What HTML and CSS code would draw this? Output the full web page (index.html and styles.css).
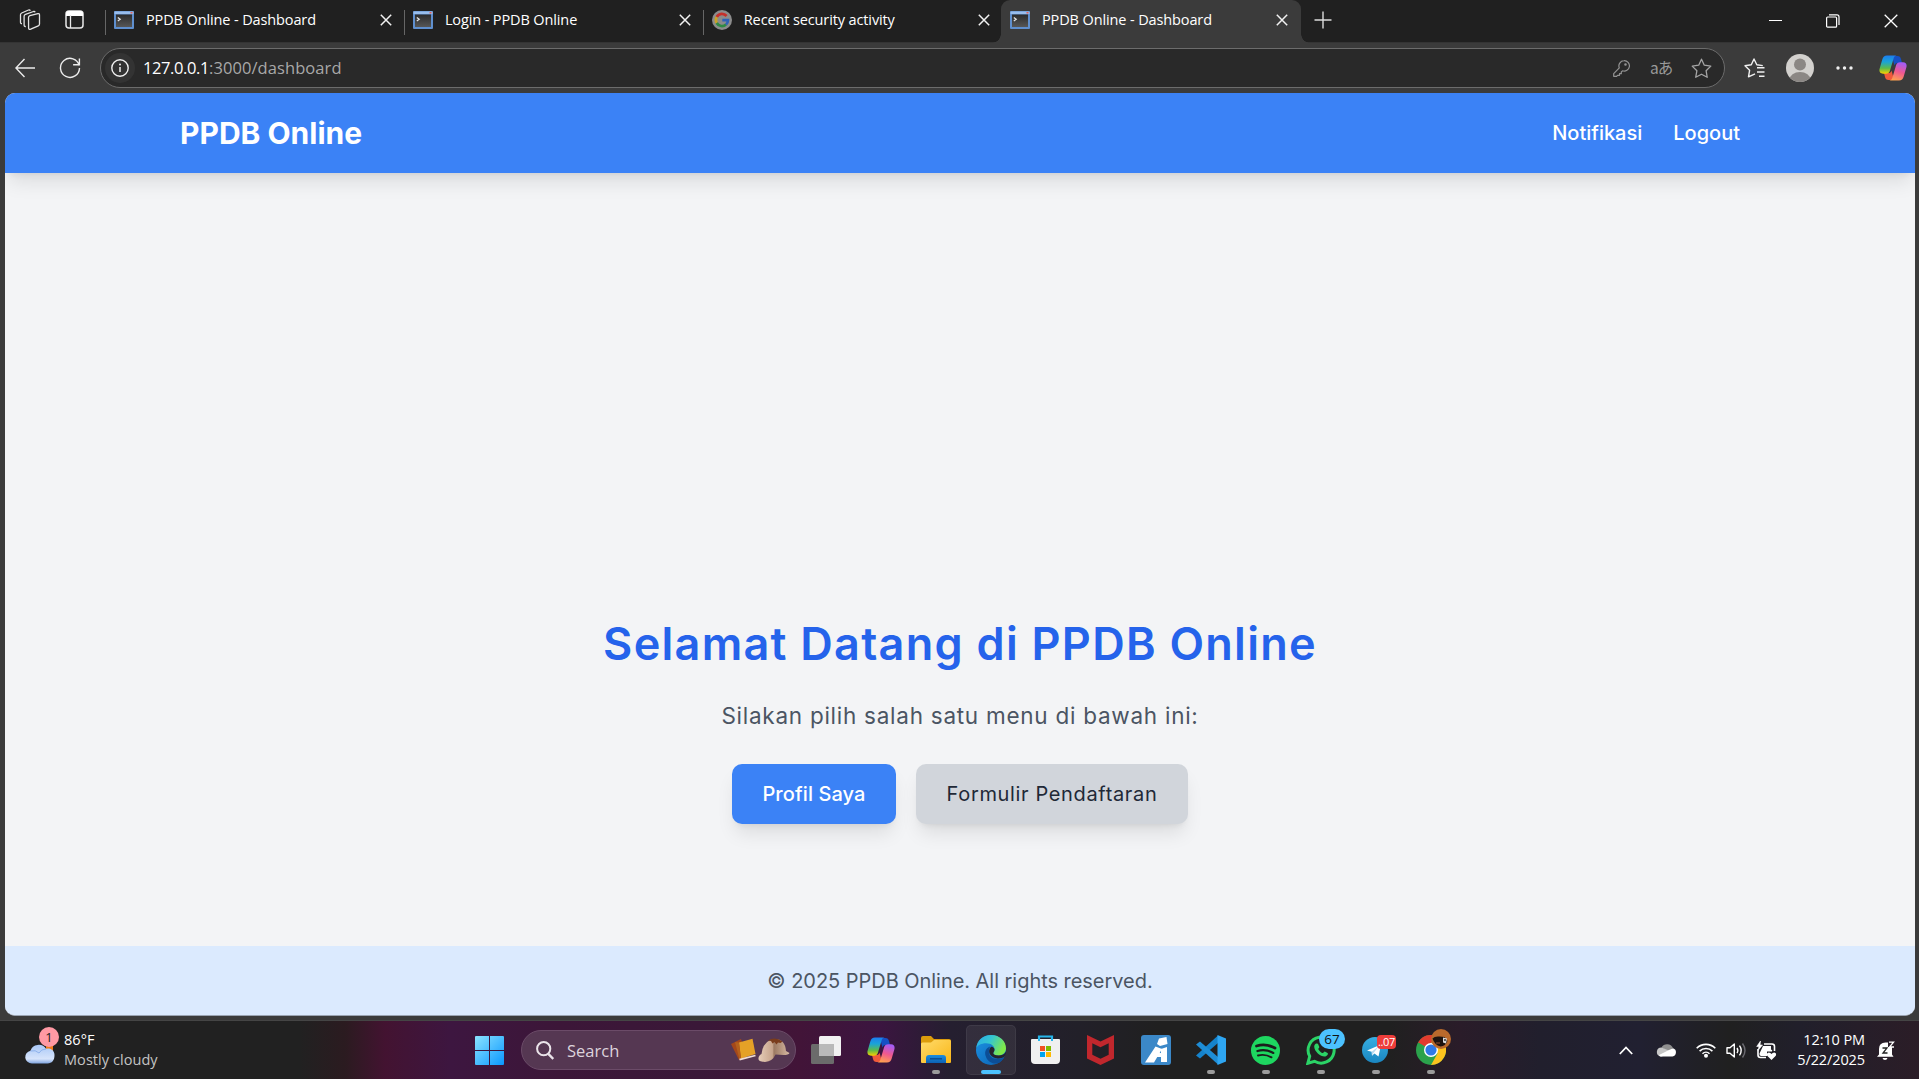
FILE: index.html
```html
<!DOCTYPE html>
<html lang="id">
<head>
<meta charset="utf-8">
<title>PPDB Online - Dashboard</title>
<link rel="stylesheet" href="styles.css">
</head>
<body>
<svg class="defs" width="0" height="0" aria-hidden="true">
  <defs>
    <linearGradient id="gTerm" x1="0" y1="0" x2="0" y2="1"><stop offset="0" stop-color="#2b2b2b"/><stop offset="1" stop-color="#565656"/></linearGradient>
    <linearGradient id="gCpA" x1="0" y1="0" x2="0" y2="1"><stop offset="0" stop-color="#1c7df0"/><stop offset=".35" stop-color="#1aa3d8"/><stop offset=".7" stop-color="#5dbb4a"/><stop offset="1" stop-color="#f6d000"/></linearGradient>
    <linearGradient id="gCpB" x1=".6" y1="0" x2=".3" y2="1"><stop offset="0" stop-color="#a45cf5"/><stop offset=".5" stop-color="#f0588f"/><stop offset="1" stop-color="#ffa34e"/></linearGradient>
    <linearGradient id="gWin" gradientUnits="userSpaceOnUse" x1="0" y1="0" x2="29" y2="29"><stop offset="0" stop-color="#8be3ff"/><stop offset="1" stop-color="#0a97ff"/></linearGradient>
    <linearGradient id="gFold" x1="0" y1="0" x2="1" y2="1"><stop offset="0" stop-color="#ffdb6b"/><stop offset="1" stop-color="#f9b617"/></linearGradient>
    <linearGradient id="gBlue" x1="0" y1="0" x2="0" y2="1"><stop offset="0" stop-color="#1b8ee0"/><stop offset="1" stop-color="#0c62b5"/></linearGradient>
    <linearGradient id="gEdge" x1="0" y1="0" x2="1" y2=".4"><stop offset="0" stop-color="#2aa9e8"/><stop offset=".5" stop-color="#35c6d0"/><stop offset="1" stop-color="#7fe84a"/></linearGradient>
    <linearGradient id="gEdge2" x1="0" y1="0" x2="1" y2="1"><stop offset="0" stop-color="#1c94e6"/><stop offset="1" stop-color="#0b5fae"/></linearGradient>
    <linearGradient id="gTg" x1="0" y1="0" x2="0" y2="1"><stop offset="0" stop-color="#37aee2"/><stop offset="1" stop-color="#1a86c0"/></linearGradient>
    <linearGradient id="gCloud" x1="0" y1="0" x2="0" y2="1"><stop offset="0" stop-color="#a9c8f7"/><stop offset=".75" stop-color="#d7e4fb"/><stop offset="1" stop-color="#7fa5e0"/></linearGradient>
    <linearGradient id="gCap" x1="0" y1="0" x2="1" y2="0"><stop offset="0" stop-color="#e6cdb8"/><stop offset=".45" stop-color="#c7a48c"/><stop offset=".5" stop-color="#9c7962"/><stop offset="1" stop-color="#d6b9a2"/></linearGradient>
  </defs>
  <symbol id="term" viewBox="0 0 20 18">
    <rect width="20" height="18" rx="1" fill="#5f8fce"/><rect x=".5" y=".5" width="19" height="2.6" fill="#98bdec"/><rect x="16.5" y="1" width="2" height="1.5" fill="#e0605a"/>
    <rect x="2" y="3.5" width="16" height="12.5" fill="url(#gTerm)"/><path d="M3.8 6.5l2.400 1.700-2.400 1.700" fill="none" stroke="#e8e8e8" stroke-width="1.200"/>
  </symbol>
  <symbol id="x" viewBox="0 0 12 12"><path d="M.8.8l10.4 10.4M11.2.8L.8 11.2" fill="none" stroke="#f2f2f2" stroke-width="1.5"/></symbol>
  <symbol id="copilot" viewBox="0 0 28 26">
    <path d="M13 1h5.500c2 0 3 1.200 3.500 3l1 4h-4c-2 0-3 .7-3.600 2.600z" fill="#1650c4"/>
    <path d="M15 25H9.500c-2 0-3-1.200-3.500-3l-1-4h4c2 0 3-.7 3.600-2.600z" fill="#f05a3c"/>
    <path d="M8 .5h9.500c-1.800.3-2.500 1.500-3 3.200L11 15.500c-.7 2.300-2 3.200-4.200 3.200H4C1 18.700-.1 16.600.6 13.800L3.300 4.500C4 1.900 5.500.5 8 .5z" fill="url(#gCpA)"/>
    <path d="M20 25.500h-9.500c1.800-.3 2.500-1.500 3-3.200L17 10.500c.7-2.300 2-3.200 4.200-3.200H24c3 0 4.100 2.100 3.400 4.900l-2.700 9.300c-.7 2.600-2.200 4-4.700 4z" fill="url(#gCpB)"/>
  </symbol>
</svg>

<header class="tabbar">
  <div class="tabtools">
    <svg class="workspaces" width="22" height="22" viewBox="0 0 22 22" fill="none" stroke="#e4e4e4" stroke-width="1.300" stroke-linejoin="round"><path d="M9.500 8.500q0-1.500 1.400-1.900l8-2q1.600-.3 1.600 1.300v9.200q0 1.300-1.200 1.700l-7.600 3.400q-2 .8-2.100-1.200z"/><path d="M6.800 17.500q-1.700.2-1.700-1.600V7.300q0-1.500 1.400-2l8-2.800q1.200-.3 1.600.8"/><path d="M3 14.700q-1.500 0-1.500-1.500V5.800q0-1.300 1.200-1.800L9.500 1q1.300-.5 1.800.7"/></svg>
    <svg width="19" height="19" viewBox="0 0 19 19"><rect x="1" y="1" width="17" height="17" rx="3" fill="none" stroke="#e8e8e8" stroke-width="1.500"/><path d="M1 6V4a3 3 0 0 1 3-3h11a3 3 0 0 1 3 3v2z" fill="#fff"/><path d="M5.500 5v13" stroke="#e8e8e8" stroke-width="1.300"/></svg>
  </div>
  <div class="tab"><svg class="fav" width="20" height="18"><use href="#term"/></svg><span>PPDB Online - Dashboard</span><svg class="close" width="12" height="12"><use href="#x"/></svg></div>
  <div class="tab"><svg class="fav" width="20" height="18"><use href="#term"/></svg><span>Login - PPDB Online</span><svg class="close" width="12" height="12"><use href="#x"/></svg></div>
  <div class="tab"><svg class="fav" width="20" height="20" viewBox="0 0 20 20"><circle cx="10" cy="10" r="10" fill="#8c8c8c"/><g fill="none" stroke-width="2.700"><path d="M4.700 7A6.100 6.100 0 0 1 14.600 6" stroke="#c5302b"/><path d="M4.700 13A6.100 6.100 0 0 1 4.700 7" stroke="#c9a227"/><path d="M4.700 13A6.100 6.100 0 0 0 14 14.600" stroke="#2f8a44"/><path d="M14 14.600A6.100 6.100 0 0 0 16 10.200H10.300" stroke="#2f62b8"/></g></svg><span>Recent security activity</span><svg class="close" width="12" height="12"><use href="#x"/></svg></div>
  <div class="tab active"><svg class="fav" width="20" height="18"><use href="#term"/></svg><span>PPDB Online - Dashboard</span><svg class="close" width="12" height="12"><use href="#x"/></svg></div>
  <svg class="newtab" width="18" height="18" viewBox="0 0 18 18"><path d="M9 .5v17M.5 9h17" stroke="#dcdcdc" stroke-width="1.400"/></svg>
  <div class="winctl">
    <svg width="13" height="13" viewBox="0 0 13 13"><path d="M0 5.500h13" stroke="#fff"/></svg>
    <svg width="14" height="14" viewBox="0 0 14 14" fill="none" stroke="#fff" stroke-width="1.200"><rect x=".6" y="3" width="10" height="10.200" rx="1"/><path d="M3 .9h8q2 0 2 2v8.100"/></svg>
    <svg width="14" height="14" viewBox="0 0 14 14"><path d="M.7.7l12.600 12.600M13.300.7L.7 13.300" stroke="#fff" stroke-width="1.300"/></svg>
  </div>
</header>

<div class="toolbar">
  <svg class="back" width="20" height="20" viewBox="0 0 20 20" fill="none" stroke="#ececec" stroke-width="1.400"><path d="M20 10H1M9.500 1L.9 10l8.600 9"/></svg>
  <svg class="reload" width="22" height="22" viewBox="0 0 22 22" fill="none" stroke="#ececec" stroke-width="1.400"><path d="M20.200 8.500A9.500 9.500 0 1 0 20.500 11M20.400 1.500v6.300h-6.300"/></svg>
  <div class="omnibox">
    <span class="siteinfo"><svg width="18" height="18" viewBox="0 0 18 18"><circle cx="9" cy="9" r="8.200" fill="none" stroke="#f0f0f0" stroke-width="1.400"/><path d="M9 8v5" stroke="#f0f0f0" stroke-width="1.500"/><circle cx="9" cy="5.500" r="1" fill="#f0f0f0"/></svg></span>
    <span class="url"><b>127.0.0.1</b>:3000/dashboard</span>
    <svg class="key" width="17" height="17" viewBox="0 0 17 17" fill="none" stroke="#939393" stroke-width="1.200" stroke-linejoin="round"><path d="M11 .7a5.200 5.200 0 1 1-1.500 10.100L8.300 12v1.700H6.500v1.600H4.500l-.9 1H.7v-2.600l5.600-5.800A5.200 5.200 0 0 1 11 .7z"/><circle cx="12.500" cy="4.500" r=".7"/></svg>
    <span class="translate">aあ</span>
    <svg class="star" width="21" height="21" viewBox="0 0 21 21" fill="none" stroke="#a5a5a5" stroke-width="1.300" stroke-linejoin="round"><path d="M10.500 1.200l2.800 6 6.500.9-4.700 4.600 1.100 6.600-5.700-3.100-5.800 3.100 1.200-6.600L1.200 8.100l6.500-.9z"/></svg>
  </div>
  <svg class="favs" width="21" height="20" viewBox="0 0 21 20" fill="none" stroke="#f0f0f0" stroke-width="1.400" stroke-linejoin="round"><path d="M20.500 9.800H13M20.500 14H13M20.500 18.200H15M11 15.800l-6.500 3 1.100-6.500L1 7.700l6.300-.9L10 1l2.800 5.800 6 .8"/></svg>
  <svg class="avatar" width="28" height="28" viewBox="0 0 28 28"><clipPath id="av"><circle cx="14" cy="14" r="14"/></clipPath><g clip-path="url(#av)"><rect width="28" height="28" fill="#d3d1ce"/><circle cx="14" cy="10.500" r="6" fill="#8b8784"/><ellipse cx="14" cy="26" rx="10.500" ry="8" fill="#8b8784"/></g></svg>
  <svg class="dots" width="17" height="4" viewBox="0 0 17 4" fill="#f0f0f0"><circle cx="2" cy="2" r="1.700"/><circle cx="8.500" cy="2" r="1.700"/><circle cx="15" cy="2" r="1.700"/></svg>
  <svg width="28" height="26"><use href="#copilot"/></svg>
</div>

<div class="viewport">
  <nav class="navbar">
    <div class="brand">PPDB Online</div>
    <div class="links"><a>Notifikasi</a><a>Logout</a></div>
  </nav>
  <main class="main">
    <h1>Selamat Datang di PPDB Online</h1>
    <p>Silakan pilih salah satu menu di bawah ini:</p>
    <div class="actions">
      <a class="btn primary">Profil Saya</a>
      <a class="btn secondary">Formulir Pendaftaran</a>
    </div>
  </main>
  <footer class="footer">© 2025 PPDB Online. All rights reserved.</footer>
</div>

<div class="taskbar">
  <div class="weather">
    <div class="weathericon">
      <svg width="32" height="22" viewBox="0 0 32 22"><path d="M22 2h7v6h-7z" fill="#f07a1c"/><path d="M8 20.500a7 6.500 0 0 1-1.500-12.800A8.500 8 0 0 1 22 5.800a6.500 6.500 0 0 1 8.500 6.500c0 5-2.500 8.200-7 8.200z" fill="url(#gCloud)"/><path d="M6.500 8q5-1.500 8.500 2 2-4 7-4" fill="none" stroke="#8fb2ec" stroke-width="1"/></svg>
      <span class="alert">1</span>
    </div>
    <div class="weathertext"><div>86°F</div><div class="dim">Mostly cloudy</div></div>
  </div>
  <svg class="start" width="29" height="29" viewBox="0 0 29 29" fill="url(#gWin)"><path d="M1 0h13v14H0V1q0-1 1-1zM15 0h13q1 0 1 1v13H15zM0 15h14v14H1q-1 0-1-1zM15 15h14v13q0 1-1 1H15z"/></svg>
  <div class="search">
    <svg width="18" height="19" viewBox="0 0 18 19" fill="none" stroke="#ebe4ea"><circle cx="7.700" cy="7.700" r="6.600" stroke-width="2"/><path d="M12.300 12.800l5 5.200" stroke-width="2.400"/></svg>
    <span>Search</span>
    <svg width="60" height="27" viewBox="0 0 60 27"><path d="M1 7l10-5 6 18-8 3z" fill="#a5481a"/><path d="M9 5.500l13.500-3.800L25.500 17 11 21.500z" fill="#e5a127"/><path d="M9 5.500L11 21.500l-1.500 1L5 5z" fill="#b4601c"/><path d="M9.500 22.700l16-4.200" stroke="#f1dfd6" stroke-width="1.800"/><path d="M31.500 17Q33 3 45 2q10 0 11 12l3.500 2q-1 2-6 2l-8-.5q-3 7-10.500 7.500-7-.5-6.500-3.500 0-3 3-4.500z" fill="url(#gCap)"/><path d="M38 3.500q7-4.500 14.500 1l-2 1.500-2.500-.5-1.500 2-2-2.500-2 1.500-1.500-2.500z" fill="#7a3c1c"/></svg>
  </div>
  <div class="apps">
    <div class="app"><svg width="30" height="29" viewBox="0 0 30 29"><rect x="0" y="8" width="23" height="20" rx="1.500" fill="#6b6b6b"/><rect x="8" y="0" width="22" height="20" rx="1.500" fill="#f1f1f1"/><path d="M8 8h15v12H9.500Q8 20 8 18.500z" fill="#b9b9b9"/></svg></div>
    <div class="app"><svg width="28" height="26"><use href="#copilot"/></svg></div>
    <div class="app run"><svg width="30" height="28" viewBox="0 0 30 28"><path d="M0 2q0-2 2-2h8l3 3h15q2 0 2 2v5H0z" fill="#dc9c0c"/><path d="M0 8q0-1.500 1.500-1.500H10L13 4h16q1 0 1 1.500V26q0 1-1 1H1q-1 0-1-1z" fill="url(#gFold)"/><path d="M5 27v-5q0-3 3-3h14q3 0 3 3v5z" fill="url(#gBlue)"/><path d="M9 22.800h12" stroke="#0a4f94" stroke-width="1.500"/></svg></div>
    <div class="app current"><svg width="30" height="30" viewBox="0 0 30 30"><circle cx="15" cy="15" r="15" fill="url(#gEdge2)"/><path d="M.3 13C1 5 7.500 0 15 0c9 0 15 6.500 15 13.200 0 5-4 7.300-7.500 7.300-3.700 0-5.200-1.300-5.200-2.300 0-.8 1.200-1.300 1.200-3.600 0-3.300-3-6.300-8.500-6.300C5 8.300 1.500 10.500.3 13z" fill="url(#gEdge)"/><path d="M14 11.500c-4 1.500-5.500 5-4.500 9 1.500 5.500 6 8.500 11.500 8 3.500-1.200 6-3.700 7-6-8 3.500-15 .5-15-5.500 0-2 .6-4 1-5.500z" fill="#0c4e97"/><path d="M30 19l-1.800 3c-2 1.200-5 1.800-7.500 1.300C16.500 22.500 13.500 20 13.200 17c-.2-2 .6-4.200 2-5.300 2 .2 3.300 1.300 3.300 2.900 0 2.300-1.200 2.800-1.200 3.600 0 1 1.500 2.300 5.200 2.300 3 0 6-1 7.500-4z" fill="#26222e"/></svg></div>
    <div class="app"><svg width="29" height="30" viewBox="0 0 29 30"><path d="M8 6V1.500h13V6" fill="none" stroke="#27b5ea" stroke-width="2.200"/><path d="M0 5q0-1 1-1h27q1 0 1 1v20q0 4-4 4H4q-4 0-4-4z" fill="#f0f0f0"/><path d="M8 3v3M21 3v3" stroke="#27b5ea" stroke-width="2"/><path d="M9 11h5v5H9z" fill="#f25022"/><path d="M15 11h5v5h-5z" fill="#7fba00"/><path d="M9 17h5v5H9z" fill="#00a4ef"/><path d="M15 17h5v5h-5z" fill="#ffb900"/></svg></div>
    <div class="app"><svg width="27" height="30" viewBox="0 0 27 30"><path d="M0 0l13.500 6.500L27 0v23.500L13.500 30 0 23.500zM5.300 8.300v11.500l8.200 4 8.200-4V8.300l-8.200 4z" fill="#c1272d" fill-rule="evenodd"/></svg></div>
    <div class="app"><svg width="30" height="30" viewBox="0 0 30 30"><rect width="30" height="30" rx="3" fill="#3b88c8"/><path d="M18 3.500L25.500 2l1 7-7.500 2-3-2zM14.500 11.500l6.500 2.500-8 13.500H4zM20 14l6-2v15h-6v-5h-7l2-3.500 5-.5z" fill="#fff"/></svg></div>
    <div class="app run"><svg width="30" height="30" viewBox="0 0 30 30"><path d="M22 8L4 23.500 0 20.500 22 .5z" fill="#1583cc"/><path d="M22 22L4 6.500 0 9.500l22 20z" fill="#1e8dd6"/><path d="M21.500 0L30 3.500v23L21.500 30z" fill="#2ea6f2"/></svg></div>
    <div class="app run"><svg width="29" height="29" viewBox="0 0 29 29"><circle cx="14.500" cy="14.500" r="14.500" fill="#1ed760"/><g fill="none" stroke="#1c1c1c" stroke-linecap="round"><path d="M5.500 10q9.500-2.800 18.500 2" stroke-width="2.800"/><path d="M6.500 15q8-2.300 15.800 1.900" stroke-width="2.300"/><path d="M7 19.500q7-1.800 13.500 1.800" stroke-width="1.900"/></g></svg></div>
    <div class="app run"><svg width="30" height="30" viewBox="0 0 30 30"><path d="M1.800 28.300l1.900-7A13 13 0 1 1 8.500 26.300z" fill="none" stroke="#2bd366" stroke-width="3"/><path d="M10.500 8.500c1 0 1.500.2 1.800 1l1 2.400c.2.700-1 1.500-1 2 0 1 3.500 4.200 4.500 4.200.7 0 1.300-1.500 2-1.500l2.700 1.300c1.200.6-.3 3.600-3 3.600-4 0-10.300-5-10.300-10 0-1.500 1.200-3 2.300-3z" fill="#2bd366"/></svg><span class="badge wa">67</span></div>
    <div class="app run"><svg width="26" height="26" viewBox="0 0 26 26" class="tg"><circle cx="13" cy="13" r="13" fill="url(#gTg)"/><path d="M5 13.500L19 7.500l-2.500 12-4-3-2.500 2.200-.3-4z" fill="#fff"/><path d="M9.700 14.700L17 9l-5.500 7-1.500 2.700z" fill="#b9d9ee"/></svg><span class="badge tgb">..07</span></div>
    <div class="app run"><svg width="30" height="30" viewBox="0 0 30 30"><circle cx="15" cy="15" r="15" fill="#2ba24c"/><path d="M15 15L2 7.500A15 15 0 0 1 28 7.500H15z" fill="#e33b2e"/><path d="M15 7.500h13A15 15 0 0 1 15 30l6.500-11.500z" fill="#fcc31e"/><path d="M2 7.500L8.500 18.700 15 15z" fill="#2ba24c"/><circle cx="15" cy="15" r="7" fill="#fff"/><circle cx="15" cy="15" r="5.600" fill="#2f7ae8"/></svg>
      <svg class="profile" width="20" height="20" viewBox="0 0 20 20"><circle cx="10" cy="10" r="10" fill="#b9692c"/><path d="M1.500 9.500q2-2.500 7-2l5 .5 3 4q-2 5-7 5.500-6-1.500-8-8z" fill="#1d1310"/><path d="M12 8.500l4 1-1 5-3-1z" fill="#dcdcdc"/><circle cx="14" cy="11" r="1" fill="#333"/><path d="M5 13h4v2H5z" fill="#5c3320"/></svg></div>
  </div>
  <div class="tray">
    <svg width="14" height="9" viewBox="0 0 14 9"><path d="M.8 8L7 1.500 13.200 8" fill="none" stroke="#fff" stroke-width="1.800"/></svg>
    <svg class="cloud" width="21" height="14" viewBox="0 0 21 14"><path d="M5.500 4.500A6.500 6.500 0 0 1 17 5l-5 4z" fill="#8f8f8f"/><path d="M4.500 13.500A4.600 4.600 0 0 1 5.500 4.400L14 8l-8 5.500z" fill="#c6c6c6"/><path d="M3 12l10-5 4-1.800a4.300 4.300 0 0 1-.5 8.300H5q-1.500 0-2-1.500z" fill="#fff"/></svg>
    <svg class="wifi" width="20" height="16" viewBox="0 0 20 16" fill="none" stroke="#fff" stroke-width="1.600"><path d="M.7 6.300a13 13 0 0 1 18.600 0M3.600 9.100a9 9 0 0 1 12.800 0M6.500 11.700a5 5 0 0 1 7 0"/><circle cx="10" cy="13.800" r="1.200" fill="#fff"/></svg>
    <svg class="vol" width="21" height="17" viewBox="0 0 21 17" fill="none" stroke="#fff" stroke-width="1.400"><path d="M1 5.700h3L8.300 2v13L4 11.300H1z" stroke-linejoin="round"/><path d="M11 6q1.700 2.500 0 5M13.500 3.700q3.500 4.800 0 9.600"/><path d="M16.500 1.500q5 7 0 14" stroke="#6b6a70"/></svg>
    <svg class="bat" width="21" height="19" viewBox="0 0 21 19"><path d="M8 3h8q2.500 0 2.500 2.500V10M2 8v6q0 2.500 2.500 2.500H10" fill="none" stroke="#fff" stroke-width="1.600"/><path d="M7 5h8v3.500q2 .5 1 2L11 10.500V15H5q-2-.5-1.500-2.500z" fill="#fff"/><path d="M4.500 0L.7 5.500H3L2 9.500 6.500 4H4z" fill="#fff" stroke="#fff" stroke-width=".6"/><path d="M15.500 19l-4.300-4.200q-1-2.800 1.600-3.300 1.800 0 2.700 1.500 1-1.500 2.800-1.500 2.500.5 1.500 3.300z" fill="#fff"/></svg>
    <div class="clock"><div>12:10 PM</div><div>5/22/2025</div></div>
    <svg class="bell" width="18" height="19" viewBox="0 0 18 19"><path d="M2 13.500V8Q2 1.500 8.500 1.500H11V6h4v7.500l1.500 2.200H0z" fill="#fff"/><path d="M5.500 17h5q-.5 2-2.500 2t-2.500-2z" fill="#fff"/><path d="M5.500 7H10L6 12h4.500" fill="none" stroke="#222" stroke-width="1.300"/><path d="M12 1.200h4.500L12.500 6H17" fill="none" stroke="#fff" stroke-width="1.300"/></svg>
  </div>
</div>
</body>
</html>
```

FILE: styles.css
```css
* { box-sizing: border-box; }
html, body { height: 100%; }
body {
  margin: 0;
  display: flex;
  flex-direction: column;
  overflow: hidden;
  background: #3b3b3b;
  color: #fff;
  font-family: "Open Sans", "Noto Sans", sans-serif;
  font-size: 14.5px;
}
svg { display: block; flex: none; }
.defs { position: absolute; }

/* Tab strip */
.tabbar {
  display: flex;
  align-items: center;
  height: 43px;
  padding-bottom: 3px;
  background: #202020;
  border-bottom: 1px solid #343434;
}
.tabtools { display: flex; align-items: center; gap: 24px; width: 105px; padding-left: 19px; }
.tab {
  position: relative;
  display: flex;
  align-items: center;
  width: 298.9px;
  height: 40px;
  padding-left: 9px;
  letter-spacing: -0.12px;
  white-space: nowrap;
}
.tab::before { content: ""; position: absolute; left: 0; top: 10px; width: 1px; height: 25px; background: #666; }
.tab span { margin-left: 12px; line-height: 20px; padding-top: 1px; }
.tab .close { margin-left: auto; margin-right: 12px; }
.tab.active {
  width: 300px;
  height: 43px;
  padding-bottom: 3px;
  margin: 0 0 -3px -0.7px;
  background: #3b3b3b;
  border-radius: 9px 9px 0 0;
}
.tab.active .close { margin-right: 13px; }
.tab.active::before, .tab.active::after {
  content: "";
  position: absolute;
  top: auto;
  bottom: 0;
  width: 9px;
  height: 9px;
}
.tab.active::before { left: -9px; background: radial-gradient(circle at 0 0, transparent 8.5px, #3b3b3b 9px); }
.tab.active::after { right: -9px; background: radial-gradient(circle at 100% 0, transparent 8.5px, #3b3b3b 9px); }
.newtab { margin-left: 13px; }
.winctl { display: flex; align-items: center; gap: 44px; margin: 3px 21px 0 auto; }

/* Address row */
.toolbar { display: flex; align-items: center; height: 50px; padding-left: 15px; }
.reload { margin-left: 24px; }
.omnibox {
  display: flex;
  align-items: center;
  width: 1625px;
  height: 40px;
  margin-left: 19px;
  padding-left: 4px;
  background: #292929;
  border: 1px solid #6c6c6c;
  border-radius: 20px;
}
.siteinfo { display: flex; align-items: center; justify-content: center; width: 30px; height: 30px; border-radius: 50%; background: #333; }
.url { margin-left: 8px; padding-bottom: 2px; font-size: 16.5px; letter-spacing: 0.08px; color: #a8a8a8; }
.url b { font-weight: 400; color: #fff; letter-spacing: -0.4px; }
.key { margin-left: auto; }
.translate { margin: 0 0 2px 20px; width: 23px; color: #999; font: 15.5px/20px "Noto Sans CJK JP", sans-serif; letter-spacing: -1px; white-space: nowrap; }
.star { margin: 0 12px 0 18px; }
.favs { margin-left: 19px; }
.avatar { margin-left: 21px; }
.dots { margin: 0 26px 0 22px; }

/* Web page */
.viewport {
  display: flex;
  flex-direction: column;
  height: 923px;
  margin: 0 4px 0 5px;
  border-radius: 10px;
  border-bottom: 1px solid #9aa4b2;
  overflow: hidden;
  background: #f3f4f6;
  font-family: Inter, sans-serif;
}
.navbar {
  display: flex;
  align-items: center;
  justify-content: space-between;
  height: 80px;
  flex: none;
  padding: 0 175px 1px;
  background: #3b82f6;
  box-shadow: 0 12.5px 19px -4px rgba(0, 0, 0, .1), 0 5px 7.5px -5px rgba(0, 0, 0, .1);
}
.brand { font-size: 30px; font-weight: 700; }
.links { display: flex; gap: 31px; font-size: 20px; font-weight: 500; }
.main {
  display: flex;
  flex-direction: column;
  align-items: center;
  justify-content: flex-end;
  gap: 30px;
  height: 773px;
  flex: none;
  padding-bottom: 122px;
}
.main h1 { margin: 0 0 1px; font-size: 45px; line-height: 50px; font-weight: 600; letter-spacing: 1.27px; color: #2563eb; }
.main p { margin: -1px 0 1px; font-size: 22.5px; line-height: 34px; letter-spacing: 0.74px; color: #4b5563; }
.actions { display: flex; gap: 20px; }
.btn {
  display: flex;
  align-items: center;
  justify-content: center;
  height: 60px;
  border-radius: 10px;
  font-size: 20px;
  box-shadow: 0 12.5px 19px -4px rgba(0, 0, 0, .1), 0 5px 7.5px -5px rgba(0, 0, 0, .1);
}
.primary { width: 164px; background: #3b82f6; font-weight: 500; letter-spacing: 0.1px; }
.secondary { width: 272px; background: #d1d5db; color: #1f2937; letter-spacing: 0.65px; }
.footer {
  display: flex;
  align-items: center;
  justify-content: center;
  flex: 1;
  background: #dbeafe;
  color: #4b5563;
  font-size: 20px;
  letter-spacing: -0.04px;
}

/* Taskbar */
.taskbar {
  display: flex;
  align-items: center;
  height: 59px;
  margin-top: auto;
  padding: 0 24px;
  border-top: 1px solid #454545;
  background: linear-gradient(90deg, #212121 0, #212121 300px, #2b1b20 345px, #431331 385px, #3d1640 450px, #3c1638 560px, #3a1838 700px, #421438 800px, #3b1540 880px, #251f30 950px, #222029 1080px, #202020 1160px, #202020 1390px, #2a1c29 1460px, #211f2d 1540px, #212031 1640px, #202020 1730px, #211f2b 1800px, #2b1d27 1919px);
}
.weather { display: flex; align-items: center; width: 451px; line-height: 20px; }
.weathertext { padding-bottom: 1px; letter-spacing: 0.06px; }
.weathericon { position: relative; width: 40px; padding-top: 7px; }
.alert {
  position: absolute;
  left: 15px;
  top: -9px;
  width: 20px;
  height: 20px;
  border-radius: 50%;
  background: #ff99a4;
  color: #222;
  font-size: 13px;
  line-height: 20px;
  text-align: center;
}
.dim { color: #c4c4c4; }
.search {
  display: flex;
  align-items: center;
  width: 275px;
  height: 40px;
  margin: 0 2px 0 17px;
  padding: 0 5px 0 14px;
  border: 1px solid #6b4b68;
  border-radius: 20px;
  background: #553752;
  color: #ddd3dc;
  font-size: 16.5px;
}
.search span { margin: 0 auto 0 13px; }
.apps { display: flex; }
.app { position: relative; display: flex; align-items: center; justify-content: center; width: 55px; height: 50px; }
.current::before { content: ""; position: absolute; inset: 0 2.5px; border-radius: 5px; background: rgba(255, 255, 255, .07); border: 1px solid rgba(255, 255, 255, .06); }
.current svg { position: relative; }
.run::after, .current::after { content: ""; position: absolute; bottom: 1px; left: 24px; width: 8px; height: 4px; border-radius: 2px; background: #9b9b9b; }
.current::after { left: 18px; width: 20px; background: #4cc2ff; }
.badge { position: absolute; color: #111; text-align: center; }
.wa { left: 26px; top: 4px; width: 26px; height: 20px; border-radius: 10px; background: #4cc2ff; font-size: 13.500px; line-height: 20px; }
.tgb { left: 29px; top: 10px; width: 19px; height: 14px; border-radius: 4px; background: #ee3d3a; color: #fff; font-size: 11px; line-height: 14px; letter-spacing: -.3px; }
.tg { margin-right: 1px; }
.profile { position: absolute; left: 28px; top: 4px; }
.tray { display: flex; align-items: center; margin-left: auto; }
.cloud { margin-left: 23px; }
.wifi { margin-left: 19px; }
.vol { margin-left: 10px; }
.bat { margin-left: 9px; }
.clock { width: 76px; margin-left: 12px; padding-bottom: 1px; text-align: right; line-height: 20px; letter-spacing: -0.1px; }
.bell { margin-left: 12px; }
```
